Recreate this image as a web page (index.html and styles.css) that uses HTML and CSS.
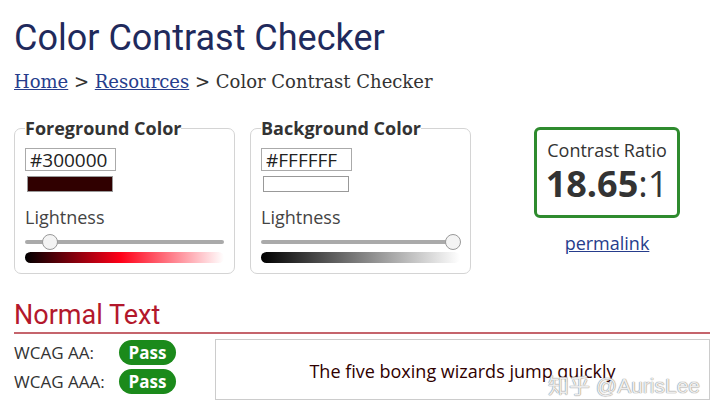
FILE: index.html
```html
<!DOCTYPE html>
<html lang="en">
<head>
  <meta charset="UTF-8">
  <meta name="viewport" content="width=device-width, initial-scale=1.0">
  <title>Color Contrast Checker</title>
  <link rel="stylesheet" href="styles.css">
</head>
<body>
  <h1 class="title">Color Contrast Checker</h1>
  <p class="crumbs"><a href="#">Home</a> &gt; <a href="#">Resources</a> &gt; Color Contrast Checker</p>

  <div class="picker-row">
    <fieldset class="picker">
      <legend>Foreground Color</legend>
      <input class="hex" type="text" value="#300000">
      <div class="swatch fg-swatch"></div>
      <label class="light-label">Lightness</label>
      <div class="slider">
        <div class="track"></div>
        <div class="thumb" style="left: 24px;"></div>
      </div>
      <div class="ramp fg-ramp"></div>
    </fieldset>

    <fieldset class="picker">
      <legend>Background Color</legend>
      <input class="hex" type="text" value="#FFFFFF">
      <div class="swatch bg-swatch"></div>
      <label class="light-label">Lightness</label>
      <div class="slider">
        <div class="track"></div>
        <div class="thumb" style="left: 191px;"></div>
      </div>
      <div class="ramp bg-ramp"></div>
    </fieldset>

    <div class="result">
      <div class="ratio-box">
        <div class="ratio-label">Contrast Ratio</div>
        <div class="ratio"><b>18.65</b>:1</div>
      </div>
      <a class="permalink" href="#">permalink</a>
    </div>
  </div>

  <h2 class="section">Normal Text</h2>
  <div class="result-row">
    <div class="checks">
      <div class="check"><span class="check-name">WCAG AA:</span><span class="pass">Pass</span></div>
      <div class="check"><span class="check-name">WCAG AAA:</span><span class="pass">Pass</span></div>
    </div>
    <div class="sample">The five boxing wizards jump quickly</div>
  </div>

  <div class="watermark">知乎 @AurisLee</div>
</body>
</html>
```

FILE: styles.css
```css
body {
  margin: 0;
  padding: 0 10px 0 14px;
  font-family: "Open Sans", sans-serif;
  background-color: #fff;
  color: #333;
  position: relative;
  height: 414px;
  overflow: hidden;
}

.title {
  font-family: Roboto, sans-serif;
  font-weight: 400;
  font-size: 36px;
  color: #1f2a5c;
  margin: 0;
  padding-top: 17px;
  line-height: 42px;
}

.crumbs {
  font-family: "DejaVu Serif", serif;
  font-size: 18px;
  color: #333;
  margin: 11px 0 0;
  line-height: 24px;
}

.crumbs a {
  color: #263d8c;
}

.picker-row {
  display: flex;
  align-items: flex-start;
  margin-top: 22px;
}

.picker {
  width: 199px;
  margin: 0 15px 0 0;
  padding: 0 10px 10px;
  border: 1px solid #d4d4d4;
  border-radius: 7px;
}

.picker legend {
  font-weight: bold;
  font-size: 18px;
  line-height: 24px;
  color: #333;
  padding: 0;
}

.hex {
  display: block;
  box-sizing: border-box;
  width: 91px;
  height: 23px;
  margin: 8px 0 0;
  padding: 0 4px;
  border: 1px solid #aaa;
  font-family: "Open Sans", sans-serif;
  font-size: 19px;
  color: #222;
}

.swatch {
  box-sizing: border-box;
  width: 86px;
  height: 16px;
  margin: 5px 0 0 2px;
  border: 1px solid #999;
}

.fg-swatch {
  background: #300000;
}

.bg-swatch {
  background: #fff;
}

.light-label {
  display: block;
  font-size: 18px;
  color: #444;
  margin-top: 13px;
  line-height: 24px;
}

.slider {
  position: relative;
  height: 18px;
  margin-top: 4px;
}

.track {
  position: absolute;
  left: 0;
  right: 0;
  top: 7px;
  height: 4px;
  border-radius: 2px;
  background: #aaa;
}

.thumb {
  position: absolute;
  top: 1px;
  width: 14px;
  height: 14px;
  margin-left: -7px;
  border-radius: 50%;
  background: #f4f4f4;
  border: 1px solid #999;
}

.ramp {
  height: 11px;
  margin-top: 1px;
  border-radius: 6px;
}

.fg-ramp {
  background: linear-gradient(to right, #000, #ff0018 48%, #fff);
}

.bg-ramp {
  background: linear-gradient(to right, #000, #fff);
}

.result {
  display: flex;
  flex-direction: column;
  align-items: center;
  margin-left: 48px;
  padding-top: 11px;
}

.ratio-box {
  width: 140px;
  height: 85px;
  border: 3px solid #2e8b2e;
  border-radius: 6px;
  text-align: center;
}

.ratio-label {
  font-size: 18px;
  color: #333;
  margin-top: 8px;
  line-height: 24px;
}

.ratio {
  font-size: 36px;
  line-height: 44px;
  color: #333;
}

.ratio b {
  font-weight: bold;
}

.permalink {
  margin-top: 13px;
  font-size: 18px;
  line-height: 24px;
  color: #263d8c;
}

.section {
  font-family: Roboto, sans-serif;
  font-weight: 400;
  font-size: 27px;
  color: #b3182c;
  margin: 24px 0 0;
  line-height: 34px;
  border-bottom: 2px solid #c5646c;
}

.result-row {
  display: flex;
  margin-top: 5px;
}

.checks {
  width: 201px;
  padding-top: 1px;
}

.check {
  display: flex;
  align-items: center;
  height: 25px;
  margin-bottom: 4px;
}

.check-name {
  width: 105px;
  font-size: 17px;
  color: #333;
}

.pass {
  display: inline-block;
  width: 57px;
  height: 25px;
  line-height: 25px;
  border-radius: 13px;
  background: #1b8a1b;
  color: #fff;
  font-weight: bold;
  font-size: 17px;
  text-align: center;
}

.sample {
  flex: 1;
  height: 61px;
  border: 1px solid #ccc;
  display: flex;
  align-items: center;
  justify-content: center;
  padding-top: 3px;
  box-sizing: border-box;
  font-size: 18px;
  color: #300000;
}

.watermark {
  position: absolute;
  left: 548px;
  top: 369px;
  font-family: "Liberation Sans", "Noto Sans CJK SC", sans-serif;
  font-size: 21px;
  color: rgba(255, 255, 255, 0.85);
  text-shadow: 0 0 1px #888, 0 0 1px #888;
}
```
